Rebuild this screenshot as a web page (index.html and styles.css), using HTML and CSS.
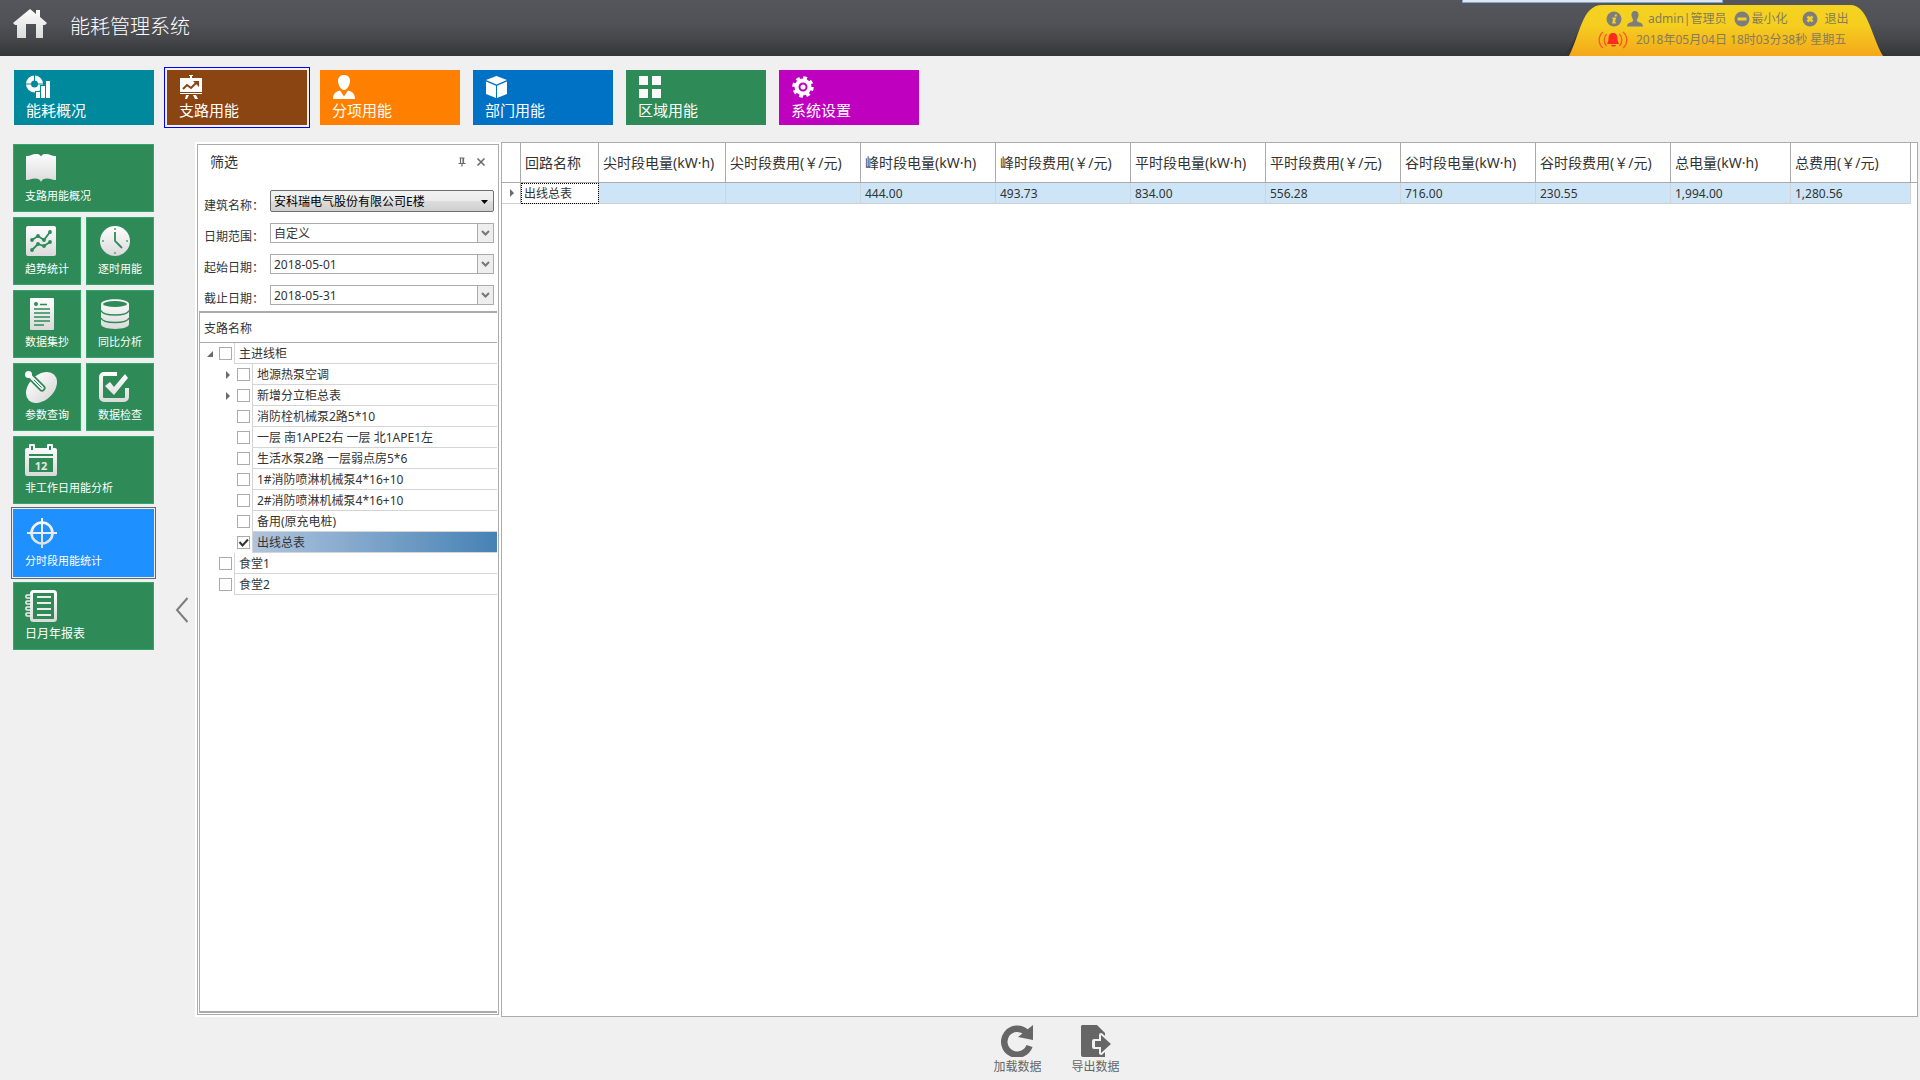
FILE: index.html
```html
<!DOCTYPE html>
<html lang="zh-CN">
<head>
    <meta charset="UTF-8">
    <meta name="viewport" content="width=device-width, initial-scale=1.0">
    <title>能耗管理系统</title>
    <link rel="stylesheet" href="styles.css">
</head>
<body>
    <svg class="defs" width="0" height="0" aria-hidden="true">
        <defs>
            <linearGradient id="silver" x1="0" y1="0" x2="0" y2="32" gradientUnits="userSpaceOnUse">
                <stop offset="0" stop-color="#ffffff"/>
                <stop offset="1" stop-color="#d9d9d9"/>
            </linearGradient>
            <linearGradient id="gold" x1="0" y1="0" x2="0" y2="1">
                <stop offset="0" stop-color="#f5d31f"/>
                <stop offset="0.4" stop-color="#f5ce20"/>
                <stop offset="1" stop-color="#f4a71a"/>
            </linearGradient>
        </defs>
    </svg>

    <header class="header">
        <svg class="home" viewBox="0 0 36 32">
            <path fill="url(#silver)" d="M18 1 L24 6 V2 H28 V9 L35 15 L33 17 H31 V30 H24 V16 H14 V30 H5 V17 H3 L1 15 Z"/>
        </svg>
        <h1 class="title">能耗管理系统</h1>
        <div class="handle"></div>
        <div class="account">
            <svg class="account-bg" viewBox="0 0 330 51" preserveAspectRatio="none">
                <path fill="#333537" d="M0 51 C14 44 18 6 40 1 H284 C308 4 308 44 326 51 Z"/>
                <path fill="url(#gold)" d="M7 51 C18 30 20 0 40 0 H288 C306 0 308 28 321 51 Z"/>
            </svg>
            <div class="account-row">
                <svg class="i16" viewBox="0 0 16 16"><circle cx="8" cy="8" r="7.500" fill="#7d7d7d"/><path d="M9 3.500h2l-.4 2h-2zM6.500 6.500h3.600L9 11h1l-.3 1.400H6L7.200 8H6.200z" fill="#f3d022"/></svg>
                <svg class="i16 user" viewBox="0 0 16 16"><path fill="#7d7d7d" d="M8 0c2.600 0 3.800 2 3.500 4.500C11.300 7 10 8 9.800 9c0 1.500 1.500 2 3.500 2.800C15 12.500 15.800 13.500 16 15.500H0c.2-2 1-3 2.700-3.700C4.700 11 6.200 10.500 6.200 9 6 8 4.700 7 4.500 4.500 4.200 2 5.400 0 8 0z"/></svg>
                <span class="who">admin|管理员</span>
                <button class="link-btn minimize" type="button"><svg class="i16" viewBox="0 0 16 16"><circle cx="8" cy="8" r="7.500" fill="#7d7d7d"/><path d="M3.500 6.500h9v3h-9z" fill="#f3d022"/></svg>最小化</button>
                <button class="link-btn quit" type="button"><svg class="i16" viewBox="0 0 16 16"><circle cx="8" cy="8" r="7.500" fill="#7d7d7d"/><path d="M5.500 5.500l5 5M10.500 5.500l-5 5" stroke="#f3d022" stroke-width="2.500"/></svg>退出</button>
            </div>
            <div class="account-row clock">
                <svg class="bell" viewBox="0 0 30 18">
                    <path fill="#ff2a1f" d="M15 2c3.500 0 4.500 2.500 4.500 5.500 0 2 .5 3.500 1.500 5.500H9c1-2 1.500-3.500 1.500-5.500C10.500 4.500 11.500 2 15 2zM13 14h5c-.5 2-4.500 2-5 0z"/>
                    <path fill="none" stroke="#ff5a1f" stroke-width="1.400" d="M8.500 3c-3 3-3 9 0 12M5 1c-5 4-5 12 0 16M21.500 3c3 3 3 9 0 12M25 1c5 4 5 12 0 16"/>
                </svg>
                <span>2018年05月04日 18时03分38秒 星期五</span>
            </div>
        </div>
    </header>

    <nav class="nav">
        <button class="nav-tile teal" type="button">
            <svg viewBox="0 0 24 24"><circle cx="8.500" cy="9" r="6" fill="none" stroke="#fff" stroke-width="5"/><path d="M8.500 0v6M0 9h6M11 9h6" stroke="#00889c" stroke-width="1"/><path d="M9 16h5v8H9zM14 10h10v14H14z" fill="#00889c"/><path fill="#fff" d="M10 17h4v6h-4zM15 11h4v12h-4zM20 6h4v17h-4z"/></svg>
            能耗概况
        </button>
        <button class="nav-tile brown active" type="button">
            <svg viewBox="0 0 24 24"><path fill="#fff" d="M10 0h4v1h-1v2h10v16H1V3h10V1h-1zM7 20h3l-2 4H6zM14 20h3l2 4h-3z"/><path d="M1 17.500h22" stroke="#8b4513"/><path d="M4 14l4-4 4 3 6-6" fill="none" stroke="#8b4513" stroke-width="2"/><path d="M14 6h6v6z" fill="#8b4513"/></svg>
            支路用能
        </button>
        <button class="nav-tile orange" type="button">
            <svg viewBox="0 0 24 24"><path fill="#fff" d="M12 0c4 0 6 2.500 6 6 0 4-3 9-6 9S6 10 6 6c0-3.500 2-6 6-6zM8 15.500l4 6 4-6c4 1 7 3 7 8.500H1c0-5.500 3-7.500 7-8.500z"/></svg>
            分项用能
        </button>
        <button class="nav-tile blue" type="button">
            <svg viewBox="0 0 24 24"><path fill="#fff" d="M11.500 1l10.500 4-10.500 4.500L1 5zM1 6.500l10 4.200V23L1 19zM22 6.500l-10 4.200V23l10-4z"/></svg>
            部门用能
        </button>
        <button class="nav-tile green" type="button">
            <svg viewBox="0 0 24 24"><path fill="#fafafa" d="M1 1h9v9H1zM14 1h9v9h-9zM1 14h9v9H1zM14 14h9v9h-9z"/></svg>
            区域用能
        </button>
        <button class="nav-tile purple" type="button">
            <svg viewBox="0 0 24 24"><circle cx="12" cy="12" r="9" fill="none" stroke="#fff" stroke-width="3.500" stroke-dasharray="3.600 3.470"/><circle cx="12" cy="12" r="6.500" fill="none" stroke="#fff" stroke-width="4"/><circle cx="12" cy="12" r="2.500" fill="#fff"/></svg>
            系统设置
        </button>
    </nav>

    <main class="main">
        <aside class="side">
            <button class="tile wide" type="button">
                <svg viewBox="0 0 32 32"><path fill="url(#silver)" d="M1 4c4 .5 6-2 10-2 2.500 0 4 .5 5 2.500C17 2.500 18.500 2 21 2c4 0 6 2.500 10 2v24c-3 .5-5-1.500-9-1.500-3 0-5 .5-6 3.500-1-3-3-3.500-6-3.500-4 0-6 2-9 1.500z"/></svg>
                支路用能概况
            </button>
            <button class="tile" type="button">
                <svg viewBox="0 0 32 32"><rect x="1" y="1" width="30" height="30" rx="2" fill="url(#silver)"/><g fill="none" stroke="#2e8b57" stroke-width="1.800"><path d="M7 15l6-4 6 4 6-8M7 25l6-6 6 2 6-4"/></g><g fill="#2e8b57"><circle cx="7" cy="15" r="1.900"/><circle cx="13" cy="11" r="1.900"/><circle cx="19" cy="15" r="1.900"/><circle cx="25" cy="7" r="1.900"/><circle cx="7" cy="25" r="1.900"/><circle cx="13" cy="19" r="1.900"/><circle cx="19" cy="21" r="1.900"/><circle cx="25" cy="17" r="1.900"/></g></svg>
                趋势统计
            </button>
            <button class="tile" type="button">
                <svg viewBox="0 0 32 32"><circle cx="17" cy="16" r="15" fill="url(#silver)"/><path d="M17 7v9l7 7" fill="none" stroke="#2e8b57" stroke-width="1.800"/><path d="M16 3h2v2h-2zM16 27h2v2h-2zM4 15h2v2H4zM28 15h2v2h-2z" fill="#7ab492"/></svg>
                逐时用能
            </button>
            <button class="tile" type="button">
                <svg viewBox="0 0 32 32"><rect x="5" width="24" height="32" rx="1" fill="url(#silver)"/><circle cx="11" cy="6" r="2" fill="#2e8b57"/><path d="M15 6.500h7M9 11h16M9 15h16M9 19h16M9 23h16M9 27h10" stroke="#2e8b57" stroke-width="1.600"/></svg>
                数据集抄
            </button>
            <button class="tile" type="button">
                <svg viewBox="0 0 32 32"><path fill="url(#silver)" d="M3 6c0-6.500 28-6.500 28 0v20c0 6.500-28 6.500-28 0z"/><ellipse cx="17" cy="6" rx="12" ry="3" fill="#2e8b57"/><path d="M3 12.500c2 6 26 6 28 0M3 20c2 6 26 6 28 0" fill="none" stroke="#2e8b57" stroke-width="1.300"/></svg>
                同比分析
            </button>
            <button class="tile" type="button">
                <svg viewBox="0 0 32 32"><ellipse cx="16.500" cy="16.500" rx="18" ry="12.500" transform="rotate(-45 16.500 16.500)" fill="url(#silver)"/><path d="M5 5l12 12" stroke="#2e8b57" stroke-width="7" stroke-linecap="round"/><path d="M3 3l14 14" stroke="#f1f1f1" stroke-width="3.600" stroke-linecap="round"/><circle cx="3.500" cy="3.500" r="3.500" fill="#fff"/><path d="M9 9l7.500 7.500" stroke="#2e8b57" stroke-width="1"/></svg>
                参数查询
            </button>
            <button class="tile" type="button">
                <svg viewBox="0 0 32 32"><path d="M19 3H6a3 3 0 0 0-3 3v20a3 3 0 0 0 3 3h20a3 3 0 0 0 3-3V17" fill="none" stroke="url(#silver)" stroke-width="4"/><path fill="url(#silver)" d="M7 15l5-4 4 5L27 3l3 4-14 17z"/></svg>
                数据检查
            </button>
            <button class="tile wide" type="button">
                <svg viewBox="0 0 32 32"><path fill="url(#silver)" fill-rule="evenodd" d="M2 4h2V2a3 3 0 0 1 6 0v2h12V2a3 3 0 0 1 6 0v2h2a2 2 0 0 1 2 2v24a2 2 0 0 1-2 2H2a2 2 0 0 1-2-2V6a2 2 0 0 1 2-2zM4 10v2h24v-2zM4 14v14h24V14zM6 2v4h2V2zM24 2v4h2V2z"/><text x="16" y="26" text-anchor="middle" class="cal-day">12</text></svg>
                非工作日用能分析
            </button>
            <button class="tile wide active" type="button">
                <svg viewBox="0 0 32 32"><circle cx="17" cy="16" r="10.500" fill="none" stroke="url(#silver)" stroke-width="2.600"/><path fill="url(#silver)" d="M16 1h2v14h14v2H18v14h-2V17H2v-2h14z"/></svg>
                分时段用能统计
            </button>
            <button class="tile wide report" type="button">
                <svg viewBox="0 0 32 32"><rect x="6.500" y="1.500" width="24" height="29" rx="2" fill="none" stroke="url(#silver)" stroke-width="3"/><path d="M12 7h14M12 13h14M12 19h14M12 25h14" stroke="#ececec" stroke-width="2"/><path d="M5 3h3v26H5z" fill="url(#silver)"/><g fill="#2e8b57" stroke="#eee" stroke-width="1.600"><rect x="1" y="5" width="5" height="3" rx="1"/><rect x="1" y="11" width="5" height="3" rx="1"/><rect x="1" y="17" width="5" height="3" rx="1"/><rect x="1" y="23" width="5" height="3" rx="1"/></g></svg>
                日月年报表
            </button>
        </aside>

        <button class="collapse" type="button" aria-label="收起">
            <svg viewBox="0 0 14 26"><path d="M12.500 1L2 13l10.500 12" fill="none" stroke="#7d7d7d" stroke-width="2"/></svg>
        </button>

        <div class="workspace">
            <div class="panels">
                <section class="filter">
                    <div class="filter-box">
                        <div class="filter-head">
                            <h2>筛选</h2>
                            <button type="button" aria-label="固定"><svg viewBox="0 0 10 10"><path d="M2.500 1h5M3.500 1v5M6.500 1v5M1.500 6.500h7M5 6v3.500" stroke="#6b6b6b" stroke-width="1.200"/><path d="M5.500 1H7v5H5.500z" fill="#6b6b6b"/></svg></button>
                            <button type="button" aria-label="关闭"><svg viewBox="0 0 10 10"><path d="M1.500 1.500l7 7M8.500 1.500l-7 7" stroke="#6b6b6b" stroke-width="1.600"/></svg></button>
                        </div>
                        <form class="form">
                            <label for="building">建筑名称：</label>
                            <select id="building" class="combo native"><option>安科瑞电气股份有限公司E楼</option></select>
                            <label for="range">日期范围：</label>
                            <select id="range" class="combo"><option>自定义</option></select>
                            <label for="start">起始日期：</label>
                            <select id="start" class="combo"><option>2018-05-01</option></select>
                            <label for="end">截止日期：</label>
                            <select id="end" class="combo"><option>2018-05-31</option></select>
                        </form>
                        <div class="tree">
                            <div class="tree-head">支路名称</div>
                            <ul>
                                <li>
                                    <div class="node"><span class="toggle open"></span><input type="checkbox" id="n1"><label for="n1">主进线柜</label></div>
                                    <ul>
                                        <li class="node"><span class="toggle closed"></span><input type="checkbox" id="n2"><label for="n2">地源热泵空调</label></li>
                                        <li class="node"><span class="toggle closed"></span><input type="checkbox" id="n3"><label for="n3">新增分立柜总表</label></li>
                                        <li class="node"><span class="toggle"></span><input type="checkbox" id="n4"><label for="n4">消防栓机械泵2路5*10</label></li>
                                        <li class="node"><span class="toggle"></span><input type="checkbox" id="n5"><label for="n5">一层 南1APE2右 一层 北1APE1左</label></li>
                                        <li class="node"><span class="toggle"></span><input type="checkbox" id="n6"><label for="n6">生活水泵2路 一层弱点房5*6</label></li>
                                        <li class="node"><span class="toggle"></span><input type="checkbox" id="n7"><label for="n7">1#消防喷淋机械泵4*16+10</label></li>
                                        <li class="node"><span class="toggle"></span><input type="checkbox" id="n8"><label for="n8">2#消防喷淋机械泵4*16+10</label></li>
                                        <li class="node"><span class="toggle"></span><input type="checkbox" id="n9"><label for="n9">备用(原充电桩)</label></li>
                                        <li class="node selected"><span class="toggle"></span><input type="checkbox" id="n10" checked><label for="n10">出线总表</label></li>
                                    </ul>
                                </li>
                                <li class="node"><span class="toggle"></span><input type="checkbox" id="n11"><label for="n11">食堂1</label></li>
                                <li class="node"><span class="toggle"></span><input type="checkbox" id="n12"><label for="n12">食堂2</label></li>
                            </ul>
                        </div>
                    </div>
                </section>

                <section class="grid">
                    <table>
                        <colgroup>
                            <col class="c-mark"><col class="c-name"><col class="c-first">
                            <col class="c-num"><col class="c-num"><col class="c-num"><col class="c-num">
                            <col class="c-num"><col class="c-num"><col class="c-num">
                            <col class="c-total"><col class="c-total"><col>
                        </colgroup>
                        <thead>
                            <tr>
                                <th></th>
                                <th>回路名称</th>
                                <th>尖时段电量(kW·h)</th>
                                <th>尖时段费用(￥/元)</th>
                                <th>峰时段电量(kW·h)</th>
                                <th>峰时段费用(￥/元)</th>
                                <th>平时段电量(kW·h)</th>
                                <th>平时段费用(￥/元)</th>
                                <th>谷时段电量(kW·h)</th>
                                <th>谷时段费用(￥/元)</th>
                                <th>总电量(kW·h)</th>
                                <th>总费用(￥/元)</th>
                                <th class="rest"></th>
                            </tr>
                        </thead>
                        <tbody>
                            <tr>
                                <td class="mark"><span class="toggle closed"></span></td>
                                <td class="focus">出线总表</td>
                                <td></td>
                                <td></td>
                                <td>444.00</td>
                                <td>493.73</td>
                                <td>834.00</td>
                                <td>556.28</td>
                                <td>716.00</td>
                                <td>230.55</td>
                                <td>1,994.00</td>
                                <td>1,280.56</td>
                                <td class="rest"></td>
                            </tr>
                        </tbody>
                    </table>
                </section>
            </div>

            <footer class="actions">
                <button type="button">
                    <svg viewBox="0 0 32 32"><path d="M25.500 7.500A13 13 0 1 0 28.500 21" fill="none" stroke="#666" stroke-width="6.500"/><path d="M32 0v15l-15-3z" fill="#666"/></svg>
                    加载数据
                </button>
                <button type="button">
                    <svg viewBox="0 0 32 32"><path fill="#666" d="M2 0h15l8 8v24H3a2 2 0 0 1-2-2V1z"/><path d="M14 16h7v-6l10 9-10 9v-6h-7z" fill="#666" stroke="#f0f0f0" stroke-width="4" stroke-linejoin="round"/><path d="M15 16h6v-6l10 9-10 9v-6h-6z" fill="#666"/></svg>
                    导出数据
                </button>
            </footer>
        </div>
    </main>
</body>
</html>
```
FILE: styles.css
```css
* {
    margin: 0;
    padding: 0;
    box-sizing: border-box;
}

body {
    min-height: 100vh;
    display: flex;
    flex-direction: column;
    background: #f0f0f0;
    color: #333;
    font-family: "Noto Sans", "Noto Sans CJK SC", sans-serif;
    font-size: 12px;
    line-height: 16px;
}

button,
select,
input {
    font: inherit;
    color: inherit;
    appearance: none;
    border: none;
    border-radius: 0;
    background: none;
}

svg {
    display: block;
    flex: none;
}

ul {
    list-style: none;
}

.defs {
    position: absolute;
}

/* 顶部标题栏 */
.header {
    position: relative;
    display: flex;
    align-items: center;
    height: 56px;
    background: linear-gradient(#55565b 0%, #515257 40%, #45474b 70%, #333637 100%);
}

.home {
    width: 36px;
    height: 32px;
    margin: 0 22px 8px 12px;
}

.title {
    margin-bottom: 3px;
    color: #fff;
    font-size: 20px;
    font-weight: 300;
    line-height: 28px;
}

.handle {
    position: absolute;
    top: 0;
    right: 197px;
    width: 261px;
    height: 3px;
    background: #dfe6ee;
    border: 1px solid #7ea6d2;
    border-top: none;
}

.account {
    position: relative;
    align-self: flex-end;
    width: 330px;
    height: 51px;
    margin-left: auto;
    margin-right: 28px;
    padding: 5px 0 0 44px;
    color: #857c5c;
}

.account-bg {
    position: absolute;
    inset: 0;
    width: 100%;
    height: 100%;
}

.account-row {
    position: relative;
    display: flex;
    align-items: center;
    height: 17px;
    white-space: nowrap;
}

.i16 {
    width: 16px;
    height: 16px;
}

.user {
    margin: 0 5px;
}

.link-btn {
    display: flex;
    align-items: center;
    gap: 1px;
}

.minimize {
    margin-left: 8px;
}

.quit {
    margin-left: 15px;
    gap: 6px;
}

.clock {
    gap: 8px;
    margin: 4px 0 0 -8px;
}

.bell {
    width: 30px;
    height: 18px;
}

/* 一级导航 */
.nav {
    display: flex;
    gap: 13px;
    padding: 14px 14px 17px;
}

.nav-tile {
    display: flex;
    flex-direction: column;
    align-items: flex-start;
    gap: 3px;
    width: 140px;
    height: 55px;
    padding: 5px 12px;
    color: #fff;
    font-size: 15px;
}

.nav-tile svg {
    width: 24px;
    height: 24px;
}

.nav-tile.active {
    outline: 1px solid #0000ff;
    outline-offset: 2px;
}

.teal { background: #00889c; }
.brown { background: #8b4513; }
.orange { background: #ff8000; }
.blue { background: #0072c6; }
.green { background: #2e8b57; }
.purple { background: #bf00bf; }

.main {
    flex: 1;
    display: flex;
    padding: 0 2px 0 13px;
}

/* 左侧磁贴菜单 */
.side {
    display: grid;
    grid-template-columns: 68px 68px;
    grid-auto-rows: 68px;
    gap: 5px;
    padding-top: 2px;
}

.tile {
    display: flex;
    flex-direction: column;
    align-items: flex-start;
    gap: 4px;
    padding: 7px 11px;
    background: #2e8b57;
    border: 1px solid #33a76a;
    color: #fff;
    font-size: 11px;
    white-space: nowrap;
}

.tile svg {
    width: 32px;
    height: 32px;
}

.tile.wide {
    grid-column: span 2;
}

.tile.active {
    background: #1e90ff;
    border-color: #1e90ff;
    outline: 1px solid #666;
    outline-offset: 1px;
}

.tile.report {
    font-size: 12px;
}

.cal-day {
    font-size: 11px;
    font-weight: 700;
    fill: #e6e6e6;
}

.collapse {
    display: flex;
    align-items: center;
    justify-content: center;
    width: 41px;
    padding: 0 0 3px 14px;
}

.collapse svg {
    width: 14px;
    height: 26px;
}

.workspace {
    flex: 1;
    min-width: 0;
    display: flex;
    flex-direction: column;
}

.panels {
    flex: 1;
    display: flex;
}

/* 筛选面板 */
.filter {
    flex: none;
    display: flex;
    width: 306px;
    padding: 2px;
    background: #fff;
}

.filter-box {
    flex: 1;
    display: flex;
    flex-direction: column;
    padding: 0 1px 1px;
    border: 1px solid #ababab;
}

.filter-head {
    display: flex;
    align-items: center;
    gap: 9px;
    height: 34px;
    padding: 0 11px;
}

.filter-head h2 {
    flex: 1;
    font-size: 14px;
    font-weight: 400;
}

.filter-head svg {
    width: 10px;
    height: 10px;
}

.form {
    display: grid;
    grid-template-columns: 66px 1fr;
    row-gap: 11px;
    align-items: end;
    padding: 11px 3px 6px 5px;
}

.form label {
    line-height: 12px;
    white-space: nowrap;
}

.combo {
    width: 100%;
    height: 20px;
    padding: 1px 20px 0 3px;
    border: 1px solid #ababab;
    background:
        url("data:image/svg+xml,%3Csvg xmlns='http://www.w3.org/2000/svg' width='16' height='18'%3E%3Cpath d='M0 0h16v18H0z' fill='%23eee'/%3E%3Cpath d='M.5 0v18' stroke='%23ababab'/%3E%3Cpath d='M5 7l3.500 3.500L12 7' fill='none' stroke='%23777' stroke-width='2'/%3E%3C/svg%3E") right center no-repeat,
        #fff;
}

.combo.native {
    height: 22px;
    padding-top: 2px;
    border-color: #707070;
    border-radius: 2px;
    color: #000;
    background:
        url("data:image/svg+xml,%3Csvg xmlns='http://www.w3.org/2000/svg' width='12' height='20'%3E%3Cpath d='M0 9h7l-3.500 4z'/%3E%3C/svg%3E") right center no-repeat,
        linear-gradient(#f2f2f2 0%, #ebebeb 50%, #dddddd 50%, #cfcfcf 100%);
}

.tree {
    flex: 1;
    border-top: 2px solid #ababab;
    border-left: 1px solid #ababab;
    border-bottom: 2px solid #ababab;
}

.tree-head {
    height: 30px;
    padding-left: 4px;
    border-bottom: 1px solid #ababab;
    line-height: 31px;
}

.tree ul ul {
    padding-left: 18px;
}

.node {
    display: flex;
    align-items: center;
    height: 21px;
}

.node input {
    width: 13px;
    height: 13px;
    margin-right: 2px;
    border: 1px solid #ababab;
    background: #fff;
}

.node input:checked {
    background: url("data:image/svg+xml,%3Csvg xmlns='http://www.w3.org/2000/svg' width='11' height='11'%3E%3Cpath d='M1.500 5l3 3.500L10 2.500' fill='none' stroke='%23333' stroke-width='2'/%3E%3C/svg%3E") center no-repeat;
}

.node label {
    flex: 1;
    height: 21px;
    padding-left: 4px;
    border-left: 1px solid #d4d4d4;
    border-bottom: 1px solid #d4d4d4;
    line-height: 22px;
    white-space: nowrap;
}

.node.selected label {
    background: linear-gradient(to right, #b0c4de, #4682b4);
}

.toggle {
    display: flex;
    align-items: center;
    justify-content: center;
    width: 19px;
}

.toggle.open::before {
    content: "";
    border-left: 6px solid transparent;
    border-bottom: 6px solid #6b6b6b;
}

.toggle.closed::before {
    content: "";
    border: 4px solid transparent;
    border-left-color: #6b6b6b;
    border-right-width: 0;
}

/* 数据表格 */
.grid {
    flex: 1;
    min-width: 0;
    overflow: auto;
    border: 1px solid #ababab;
    background: #fff;
}

.grid table {
    width: 100%;
    table-layout: fixed;
    border-spacing: 0;
}

.c-mark { width: 19px; }
.c-name { width: 78px; }
.c-first { width: 127px; }
.c-num { width: 135px; }
.c-total { width: 120px; }

.grid th {
    height: 40px;
    padding-left: 4px;
    border-right: 1px solid #ababab;
    border-bottom: 1px solid #ababab;
    font-size: 14px;
    font-weight: 400;
    text-align: left;
    white-space: nowrap;
}

.grid td {
    height: 21px;
    padding: 2px 0 0 4px;
    background: #cde5f7;
    border-right: 1px solid #d0d4d8;
    border-bottom: 1px solid #d0d0d0;
}

.grid td.mark {
    padding: 0;
    background: #fff;
    border-right-color: #ababab;
}

.grid td.focus {
    background: #fff;
    padding-left: 3px;
    outline: 1px dotted #000;
    outline-offset: -1px;
}

.grid .rest {
    padding: 0;
    border-right: none;
}

.grid td.rest {
    background: #fff;
    border-bottom: none;
}

/* 底部操作 */
.actions {
    display: flex;
    justify-content: center;
    gap: 30px;
    height: 63px;
    padding-top: 8px;
    color: #666;
}

.actions button {
    display: flex;
    flex-direction: column;
    align-items: center;
    gap: 2px;
    height: 50px;
}

.actions svg {
    width: 32px;
    height: 32px;
}
```
